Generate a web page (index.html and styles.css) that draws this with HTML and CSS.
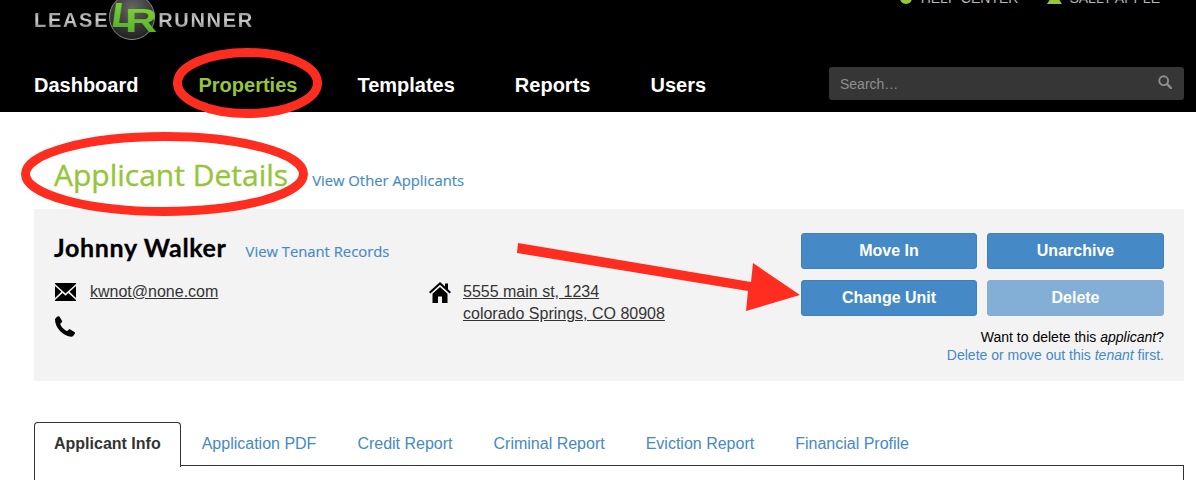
FILE: index.html
```html
<html>
<head>
<title>Applicant Details</title>
<link rel="stylesheet" href="styles.css">
</head>
<body>
  <div class="header">
    <div class="header-top">
      <div class="logo">
        <span class="logo-word">LEASE</span>
        <svg class="logo-mark" width="50" height="46" viewBox="0 0 50 46">
          <defs>
            <radialGradient id="disc" cx="0.5" cy="0.3" r="0.75">
              <stop offset="0" stop-color="#666"/>
              <stop offset="1" stop-color="#1a1a1a"/>
            </radialGradient>
            <linearGradient id="mark" x1="0" y1="0" x2="0" y2="1">
              <stop offset="0" stop-color="#86d832"/>
              <stop offset="1" stop-color="#4cab2b"/>
            </linearGradient>
          </defs>
          <circle cx="24" cy="20" r="22.5" fill="url(#disc)" stroke="#8a8a8a" stroke-width="1"/>
          <text class="logo-letter" transform="translate(2 30) skewX(-8) scale(1.15 1)" font-size="35" x="0" y="0">L</text>
          <text class="logo-letter" transform="translate(17 35) scale(1.35 1)" font-size="33" x="0" y="0">R</text>
        </svg>
        <span class="logo-word">RUNNER</span>
      </div>
      <div class="top-links">
        <span class="top-link link-help">
          <svg width="12" height="12" viewBox="0 0 12 12"><circle cx="6" cy="6" r="6" fill="#97c43a"/></svg>
          HELP CENTER
        </span>
        <span class="top-link">
          <svg width="15" height="12" viewBox="0 0 15 12"><path d="M0 12 L4.5 5 L10.5 5 L15 12 Z" fill="#97c43a"/></svg>
          SALLY APPLE
        </span>
      </div>
    </div>
    <div class="nav">
      <a class="nav-item">Dashboard</a>
      <a class="nav-item nav-active">Properties</a>
      <a class="nav-item">Templates</a>
      <a class="nav-item">Reports</a>
      <a class="nav-item">Users</a>
      <div class="search">
        <span>Search…</span>
        <svg class="search-icon" width="14" height="14" viewBox="0 0 14 14"><circle cx="5.7" cy="5.7" r="4.4" fill="none" stroke="#8f8f8f" stroke-width="1.9"/><path d="M9 9 L13 13" stroke="#8f8f8f" stroke-width="2.4" stroke-linecap="round"/></svg>
      </div>
    </div>
  </div>

  <div class="content">
    <div class="title-row">
      <h1 class="page-title">Applicant Details</h1>
      <a class="title-link">View Other Applicants</a>
    </div>

    <div class="card">
      <div class="card-main">
        <div class="name-row">
          <span class="name">Johnny Walker</span>
          <a class="title-link">View Tenant Records</a>
        </div>
        <div class="contact">
          <div class="contact-col">
            <div class="contact-line">
              <svg class="icon icon-mail" width="21" height="18" viewBox="0 0 22 18" preserveAspectRatio="none"><path d="M0 0 H22 V1 L11 10.5 L0 1 Z M0 3 V15 L6.7 8.8 Z M22 3 V15 L15.3 8.8 Z M0 18 V17 L8 10 L11 12.8 L14 10 L22 17 V18 Z" fill="#000"/></svg>
              <a class="contact-text">kwnot@none.com</a>
            </div>
            <div class="contact-line phone-line">
              <svg class="icon" width="22" height="21" viewBox="0 0 22 21"><path d="M1 3.5 C1 2.5 3.5 0.3 4.5 0.3 C5 0.3 5.4 0.6 5.7 1.1 L8 4.7 C8.4 5.4 8.2 6 7.6 6.5 L6.2 7.7 C6.5 9 7.4 10.5 8.7 12 C10.2 13.6 12 14.8 13.3 15.1 L14.6 13.7 C15.1 13.2 15.7 13.1 16.3 13.5 L20.3 15.9 C20.9 16.3 21.1 16.7 21 17.2 C20.7 18.5 18.6 20.7 17.4 20.7 C13.5 20.7 9.2 18.3 6 15 C2.9 11.7 1 7.4 1 3.5 Z" fill="#000"/></svg>
            </div>
          </div>
          <div class="contact-col">
            <div class="contact-line address-line">
              <svg class="icon icon-home" width="22" height="21" viewBox="0 0 22 21"><path d="M11 0 L16 4.6 V1.5 H19 V7.3 L22 10 L20.6 11.4 L11 2.8 L1.4 11.4 L0 10 Z M3.5 11.7 L11 5 L18.5 11.7 V21 H13 V14.5 H9 V21 H3.5 Z" fill="#000"/></svg>
              <a class="contact-text">5555 main st, 1234<br>colorado Springs, CO 80908</a>
            </div>
          </div>
        </div>
      </div>
      <div class="actions">
        <div class="btn-grid">
          <button class="btn">Move In</button>
          <button class="btn">Unarchive</button>
          <button class="btn">Change Unit</button>
          <button class="btn btn-disabled">Delete</button>
        </div>
        <div class="delete-note">Want to delete this <em>applicant</em>?</div>
        <div class="delete-help">Delete or move out this <em>tenant</em> first.</div>
      </div>
    </div>

    <div class="tabs">
      <a class="tab tab-active">Applicant Info</a>
      <a class="tab">Application PDF</a>
      <a class="tab">Credit Report</a>
      <a class="tab">Criminal Report</a>
      <a class="tab">Eviction Report</a>
      <a class="tab">Financial Profile</a>
    </div>
    <div class="tab-body"></div>
  </div>

  <!-- red markup drawn on top of the screenshot -->
  <svg class="markup" width="1196" height="480" viewBox="0 0 1196 480">
    <ellipse cx="247.5" cy="83" rx="70" ry="30.5" fill="none" stroke="#ff2d20" stroke-width="9"/>
    <ellipse cx="164.5" cy="174" rx="139" ry="37.5" fill="none" stroke="#ff2d20" stroke-width="9"/>
    <path d="M518 243 L751 282 L753 263 L800 295 L746 311 L748 291 L517 253 Z" fill="#ff2d20"/>
  </svg>
</body>
</html>
```

FILE: styles.css
```css
html,body { margin: 0; padding: 0; font-family: "Liberation Sans", sans-serif; color: #333; background: #fff; }
body { height: 480px; overflow: hidden; position: relative; }
a { cursor: pointer; }

.header { height: 112px; background: #000; overflow: hidden; }
.header-top { display: flex; justify-content: space-between; height: 67px; padding: 0 36px 0 34px; }
.logo { display: flex; align-items: flex-start; height: 46px; margin-top: -3px; }
.logo-word { margin-top: 11px; font-size: 20px; font-weight: bold; letter-spacing: 1.7px; line-height: 24px; background: linear-gradient(#7c7c7c, #cfcfcf 50%, #6a6a6a); -webkit-background-clip: text; background-clip: text; color: transparent; }
.logo-mark { margin-left: -1px; overflow: visible; }
.logo-letter { font-family: "Liberation Sans", sans-serif; font-weight: bold; fill: url(#mark); }
.top-links { display: flex; gap: 29px; margin-top: -8px; font-size: 14px; color: #b5b5b5; line-height: 12px; height: 12px; }
.top-link { display: flex; align-items: center; gap: 7px; white-space: nowrap; }
.link-help { gap: 9px; }

.nav { display: flex; align-items: flex-start; gap: 60px; height: 45px; padding: 0 12px 0 34px; }
.nav-item { font-size: 20px; font-weight: bold; color: #fff; line-height: 37px; }
.nav-active { color: #97c43a; }
.search { display: flex; align-items: center; justify-content: space-between; width: 355px; height: 33px; box-sizing: border-box; margin-left: auto; padding: 0 12px 0 11px; background: #363636; border-radius: 3px; font-size: 14px; color: #8f8f8f; }
.search-icon { margin-bottom: 3px; }

.content { padding: 0 12px 0 34px; }
.title-row { display: flex; align-items: baseline; gap: 24px; height: 97px; box-sizing: border-box; padding-top: 41px; margin-left: 20px; }
.page-title { margin: 0; font-family: "Open Sans", sans-serif; font-size: 30px; font-weight: normal; -webkit-text-stroke: 0.35px #97c43a; color: #97c43a; line-height: 44px; }
.title-link { font-family: "Open Sans", sans-serif; font-size: 14.8px; -webkit-text-stroke: 0.15px #4589c6; color: #4589c6; }

.card { display: flex; justify-content: space-between; height: 172px; box-sizing: border-box; padding: 23px 20px 0; background: #f3f3f3; }
.name-row { display: flex; align-items: baseline; gap: 19px; line-height: 30px; }
.name { font-family: "Lato", sans-serif; font-weight: bold; font-size: 25px; letter-spacing: 0.65px; -webkit-text-stroke: 0.3px #000; color: #000; }
.contact { display: grid; grid-template-columns: 375px auto; margin-top: 15px; }
.contact-line { display: flex; align-items: flex-start; gap: 14px; }
.address-line { gap: 12px; }
.contact-text { font-size: 16px; line-height: 22px; text-decoration: underline; color: #333; }
.phone-line { margin-top: 13px; }
.icon { display: block; flex: none; }
.icon-mail { margin: 2px 0 0 1px; }
.icon-home { margin-top: 1px; }

.actions { width: 363px; padding-top: 1px; text-align: right; }
.btn-grid { display: grid; grid-template-columns: 176px 177px; gap: 11px 10px; margin-bottom: 12px; }
.btn { height: 36px; padding: 0; border: 1px solid #3f80ba; border-radius: 3px; background: #4589c6; color: #fff; font-family: "Liberation Sans", sans-serif; font-size: 16px; font-weight: bold; }
.btn-disabled { background: #83afd7; border-color: #83afd7; }
.delete-note { font-size: 14px; line-height: 18px; color: #000; }
.delete-help { font-size: 14px; line-height: 18px; color: #4589c6; }

.tabs { display: flex; margin-top: 41px; height: 44px; box-sizing: border-box; border-bottom: 1px solid #333; }
.tab { height: 43px; padding: 0 19px 0 20px; border: 1px solid transparent; border-bottom: 0; font-size: 16px; line-height: 42px; color: #4589c6; }
.tab-active { height: 44px; padding: 0 19px; border-color: #333; border-radius: 4px 4px 0 0; background: #fff; font-weight: bold; color: #333; }
.tab-body { height: 14px; border: 1px solid #333; border-top: 0; }

.markup { position: absolute; left: 0; top: 0; pointer-events: none; }
```
